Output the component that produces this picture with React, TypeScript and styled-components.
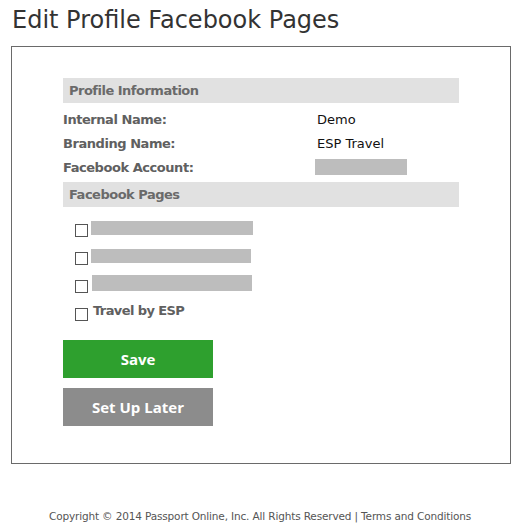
import React from "react";
import styled, { createGlobalStyle } from "styled-components";

const Global = createGlobalStyle`
  html, body { margin: 0; padding: 0; background: #fff; }
  body { font-family: "DejaVu Sans", Verdana, sans-serif; }
`;

const Page = styled.div`
  width: 521px;
  height: 532px;
  box-sizing: border-box;
  padding: 5px 10px 0 11px;
  display: flex;
  flex-direction: column;
`;

const Title = styled.h1`
  margin: 0 0 10px 1px;
  font-size: 24px;
  font-weight: normal;
  color: #333;
  line-height: 31px;
`;

const Panel = styled.div`
  width: 500px;
  box-sizing: border-box;
  border: 1px solid #6a6a6a;
  padding: 31px 51px 37px 51px;
  display: flex;
  flex-direction: column;
`;

const SectionHeader = styled.div`
  height: 25px;
  background: #e1e1e1;
  color: #6a6a6a;
  font-weight: bold;
  font-size: 13px;
  letter-spacing: -0.5px;
  padding-left: 6px;
  display: flex;
  align-items: center;
`;

const InfoGrid = styled.div`
  display: grid;
  grid-template-columns: 254px 1fr;
  grid-auto-rows: 24px;
  padding: 4px 0 3px;
  align-items: center;
`;

const Label = styled.div`
  font-weight: bold;
  font-size: 13px;
  letter-spacing: -0.45px;
  color: #606060;
`;

const Value = styled.div`
  font-size: 13px;
  color: #111;
`;

const Redacted = styled.div<{ $w: number; $h?: number; $ml?: number }>`
  width: ${(p) => p.$w}px;
  height: ${(p) => p.$h ?? 14}px;
  background: #bdbdbd;
  margin-left: ${(p) => p.$ml ?? 0}px;
`;

const PagesList = styled.div`
  display: flex;
  flex-direction: column;
  padding: 2px 0 0 12px;
`;

const CheckRow = styled.label`
  height: 28px;
  display: flex;
  align-items: flex-end;
  gap: 3px;
  padding-bottom: 2px;
  box-sizing: border-box;
`;

const Box = styled.span`
  width: 11px;
  height: 11px;
  border: 1px solid #555;
  background: #fff;
  flex: none;
  margin-bottom: -2px;
`;

const CheckText = styled.span`
  font-weight: bold;
  font-size: 13px;
  letter-spacing: -0.6px;
  color: #606060;
  line-height: 16px;
  margin-left: 2px;
`;

const Button = styled.button<{ $bg: string; $mt: number }>`
  width: 150px;
  height: 38px;
  border: none;
  background: ${(p) => p.$bg};
  color: #fff;
  font-family: "Open Sans", "DejaVu Sans", sans-serif;
  font-weight: bold;
  font-size: 15px;
  margin-top: ${(p) => p.$mt}px;
  padding: 0;
  cursor: pointer;
`;

const Footer = styled.div`
  margin-top: 46px;
  text-align: center;
  font-size: 10.5px;
  letter-spacing: -0.15px;
  color: #555;
  padding-right: 2px;
`;

export default function App() {
  return (
    <>
      <Global />
      <Page>
        <Title>Edit Profile Facebook Pages</Title>
        <Panel>
          <SectionHeader>Profile Information</SectionHeader>
          <InfoGrid>
            <Label>Internal Name:</Label>
            <Value>Demo</Value>
            <Label>Branding Name:</Label>
            <Value>ESP Travel</Value>
            <Label>Facebook Account:</Label>
            <Redacted $w={92} $h={16} $ml={-2} />
          </InfoGrid>
          <SectionHeader>Facebook Pages</SectionHeader>
          <PagesList>
            <CheckRow>
              <Box />
              <Redacted $w={162} />
            </CheckRow>
            <CheckRow>
              <Box />
              <Redacted $w={160} />
            </CheckRow>
            <CheckRow>
              <Box />
              <Redacted $w={160} $h={16} $ml={1} />
            </CheckRow>
            <CheckRow>
              <Box />
              <CheckText>Travel by ESP</CheckText>
            </CheckRow>
          </PagesList>
          <Button $bg="#2ea02e" $mt={19}>Save</Button>
          <Button $bg="#8c8c8c" $mt={10}>Set Up Later</Button>
        </Panel>
        <Footer>Copyright © 2014 Passport Online, Inc. All Rights Reserved | Terms and Conditions</Footer>
      </Page>
    </>
  );
}
